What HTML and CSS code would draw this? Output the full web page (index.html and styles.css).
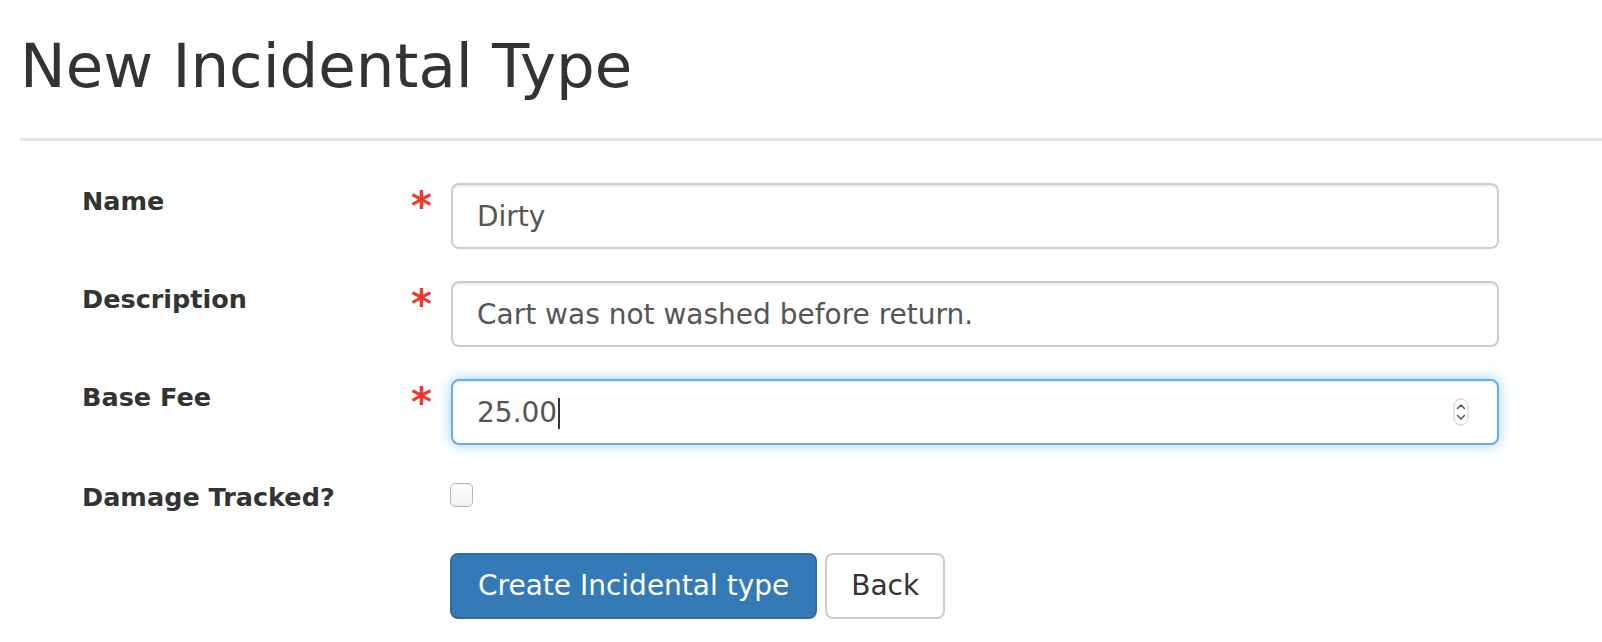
FILE: index.html
```html
<!DOCTYPE html>
<html lang="en">
<head>
<meta charset="utf-8">
<title>New Incidental Type</title>
<link rel="stylesheet" href="styles.css">
</head>
<body>
<div class="page">
  <header class="page-header">
    <h1 class="title">New Incidental Type</h1>
  </header>
  <form class="form">
    <div class="row">
      <label class="label" for="name">Name</label>
      <span class="req">*</span>
      <input class="control" id="name" type="text" value="Dirty">
    </div>
    <div class="row">
      <label class="label" for="desc">Description</label>
      <span class="req">*</span>
      <input class="control" id="desc" type="text" value="Cart was not washed before return.">
    </div>
    <div class="row">
      <label class="label" for="fee">Base Fee</label>
      <span class="req">*</span>
      <div class="field">
        <input class="control focused" id="fee" type="text" value="25.00">
        <span class="caret"></span>
        <svg class="spinner" width="16" height="28" viewBox="0 0 16 28">
          <rect x="1" y="1" width="14" height="26" rx="7" ry="7" fill="#fff" stroke="#c9c9c9" stroke-width="1"/>
          <path d="M4.5 10.5 L8 7 L11.5 10.5" fill="none" stroke="#555" stroke-width="1.5" stroke-linecap="round" stroke-linejoin="round"/>
          <path d="M4.5 17.5 L8 21 L11.5 17.5" fill="none" stroke="#555" stroke-width="1.5" stroke-linecap="round" stroke-linejoin="round"/>
        </svg>
      </div>
    </div>
    <div class="row row-check">
      <label class="label" for="dmg">Damage Tracked?</label>
      <span class="req-empty"></span>
      <div class="check-cell"><input class="check" id="dmg" type="checkbox"></div>
    </div>
    <div class="actions">
      <button class="btn btn-primary" type="button">Create Incidental type</button>
      <button class="btn btn-default" type="button">Back</button>
    </div>
  </form>
</div>
</body>
</html>
```

FILE: styles.css
```css
html, body {
  margin: 0;
  padding: 0;
  background: #fff;
}

body {
  font-family: "DejaVu Sans", Verdana, sans-serif;
  color: #333;
}

.page {
  width: 1602px;
}

.page-header {
  margin-left: 20px;
  padding-top: 33px;
  border-bottom: 3px solid #e5e5e5;
}

.title {
  margin: 0 0 39px 0;
  padding: 0;
  font-size: 61px;
  font-weight: normal;
  line-height: 66px;
  color: #333;
}

.form {
  padding: 42px 0 0 82px;
  margin: 0;
}

.row {
  display: grid;
  grid-template-columns: 329px 40px 1048px;
  align-items: start;
  margin-bottom: 32px;
}

.label {
  font-weight: bold;
  font-size: 25.5px;
  line-height: 36px;
  color: #333;
}

.row-check .label {
  padding-top: 2px;
}

.req {
  font-family: "DejaVu Sans", sans-serif;
  font-weight: bold;
  color: #ec3b30;
  font-size: 40px;
  line-height: 40px;
  padding-top: 3px;
}

.control {
  box-sizing: border-box;
  display: block;
  width: 1048px;
  height: 66px;
  margin: 0;
  padding: 0 24px;
  border: 2px solid #ccc;
  border-radius: 8px;
  background: #fff;
  font-family: "DejaVu Sans", Verdana, sans-serif;
  font-size: 28px;
  color: #555;
  box-shadow: inset 0 2px 2px rgba(0, 0, 0, 0.075);
  outline: none;
}

.control.focused {
  border-color: #66afe9;
  box-shadow: inset 0 2px 2px rgba(0, 0, 0, 0.075), 0 0 14px rgba(102, 175, 233, 0.6);
}

.field {
  position: relative;
  width: 1048px;
}

.caret {
  position: absolute;
  left: 107px;
  top: 19px;
  width: 2px;
  height: 31px;
  background: #333;
}

.spinner {
  position: absolute;
  right: 30px;
  top: 19px;
}

.row-check {
  min-height: 44px;
}

.check-cell {
  padding-top: 6px;
}

.check {
  -webkit-appearance: none;
  appearance: none;
  display: block;
  box-sizing: border-box;
  width: 23px;
  height: 24px;
  margin: 0 0 0 -1px;
  border: 1.5px solid #b5b5b5;
  border-radius: 5px;
  background: linear-gradient(#ffffff, #f1f1f1);
  box-shadow: inset 0 1px 1px rgba(0, 0, 0, 0.05);
}

.actions {
  display: flex;
  gap: 8px;
  padding-left: 368px;
}

.btn {
  box-sizing: border-box;
  height: 66px;
  margin: 0;
  padding: 0 26px;
  border: 2px solid transparent;
  border-radius: 8px;
  font-family: "DejaVu Sans", Verdana, sans-serif;
  font-size: 28px;
  line-height: 1;
  cursor: pointer;
}

.btn-primary {
  background: #337ab7;
  border-color: #2e6da4;
  color: #fff;
}

.btn-default {
  padding: 0 24px;
  background: #fff;
  border-color: #ccc;
  color: #333;
}
```
